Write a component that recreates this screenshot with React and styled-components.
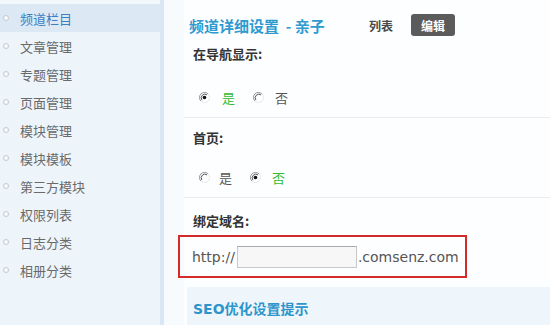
import React from "react";
import styled, { createGlobalStyle } from "styled-components";

const Global = createGlobalStyle`
  html, body { margin: 0; padding: 0; }
  body {
    width: 550px; height: 325px; overflow: hidden;
    background: #f8fbfd;
    font-family: "Noto Sans CJK SC", "Noto Sans", sans-serif;
  }
`;

const Page = styled.div`
  display: flex;
  width: 550px;
  height: 325px;
`;

const Sidebar = styled.ul`
  list-style: none;
  margin: 0;
  padding: 4px 0 0;
  width: 160px;
  flex: none;
  background: linear-gradient(to bottom, #f3f8fc 0, #f3f8fc 4px, #edf4fa 4px);
  border-right: 4px solid #d8e7f3;
  box-sizing: content-box;
`;

const NavItem = styled.li`
  display: flex;
  align-items: center;
  height: 28px;
  padding-left: 3px;
  gap: 11px;
  font-size: 13px;
  color: ${(p) => (p.$active ? "#3b7fc2" : "#6a6a6a")};
  background: ${(p) => (p.$active ? "#dce9f5" : "transparent")};
`;

const Bullet = styled.span`
  width: 4px;
  height: 4px;
  border: 1px solid #c3c8cc;
  border-radius: 50%;
  background: #f8fafc;
`;

const Main = styled.div`
  flex: 1;
  display: flex;
  flex-direction: column;
  padding-left: 20px;
  background: #f8fbfd;
`;

const Panel = styled.div`
  flex: 1;
  display: flex;
  flex-direction: column;
  background: #fdfeff;
`;

const Header = styled.div`
  display: flex;
  align-items: center;
  height: 22px;
  margin-top: 14px;
  padding-left: 5px;
`;

const Title = styled.h1`
  margin: 0;
  font-size: 15px;
  font-weight: 700;
  color: #2e9ad0;
  white-space: pre;
  width: 180px;
`;

const Tab = styled.span`
  font-size: 12px;
  font-weight: 700;
  color: #4a4a4a;
  margin-right: 18px;
`;

const ActiveTab = styled.span`
  display: inline-flex;
  align-items: center;
  justify-content: center;
  width: 44px;
  height: 22px;
  border-radius: 3px;
  background: #5b5b5b;
  color: #fff;
  font-size: 12px;
  font-weight: 700;
`;

const Section = styled.div`
  padding: ${(p) => p.$top}px 0 ${(p) => (p.$divider ? 10 : 0)}px 9px;
  border-bottom: ${(p) => (p.$divider ? "1px solid #ececec" : "none")};
`;

const Label = styled.div`
  font-size: 13px;
  line-height: 18px;
  font-weight: 700;
  color: #333;
`;

const RadioRow = styled.div`
  display: flex;
  align-items: center;
  height: 20px;
  margin-top: ${(p) => p.$gap}px;
  padding-left: 6px;
`;

const Option = styled.label`
  display: flex;
  align-items: center;
  gap: ${(p) => p.$gap}px;
  margin-right: 18px;
  font-size: 13px;
  color: ${(p) => (p.$checked ? "#33bb33" : "#555")};
`;

const RadioSvg = styled.svg`
  width: 11px;
  height: 11px;
  flex: none;
`;

const Radio = ({ checked }) => (
  <RadioSvg viewBox="0 0 12 12">
    <circle cx="6" cy="6" r="5.5" fill="#fff" />
    <path d="M9.9 2.1 A5.5 5.5 0 0 0 2.1 9.9" fill="none" stroke="#8a8a8a" strokeWidth="1" />
    <path d="M9.9 2.1 A5.5 5.5 0 0 1 2.1 9.9" fill="none" stroke="#e6e6e6" strokeWidth="1" />
    <path d="M8.8 3.2 A4 4 0 0 0 3.2 8.8" fill="none" stroke="#444" strokeWidth="1" />
    {checked && <circle cx="6" cy="6" r="2" fill="#111" />}
  </RadioSvg>
);

const DomainBox = styled.div`
  display: flex;
  align-items: center;
  height: 39px;
  margin: 5px 0 0 -15px;
  width: 273px;
  padding-left: 12px;
  border: 2px solid #d42a2a;
  font-family: "DejaVu Sans", sans-serif;
  font-size: 14px;
  color: #555;
`;

const DomainInput = styled.input`
  box-sizing: border-box;
  width: 120px;
  height: 22px;
  margin: 0 1px 0 2px;
  border: 1px solid #c8c8c8;
  border-top-color: #a9a9a9;
  background: #f7f7f7;
`;

const SeoBar = styled.div`
  flex: 1;
  margin: 9px 0 0 3px;
  padding: 11px 0 0 6px;
  background: #eef5fb;
  font-family: "DejaVu Sans", "Noto Sans CJK SC", sans-serif;
  font-size: 14px;
  font-weight: 700;
  color: #2e95cc;
`;

const navItems = ["频道栏目", "文章管理", "专题管理", "页面管理", "模块管理", "模块模板", "第三方模块", "权限列表", "日志分类", "相册分类"];

export default function App() {
  return (
    <>
      <Global />
      <Page>
        <Sidebar>
          {navItems.map((t, i) => (
            <NavItem key={t} $active={i === 0}>
              <Bullet />
              {t}
            </NavItem>
          ))}
        </Sidebar>
        <Main>
          <Panel>
            <Header>
              <Title>{"频道详细设置  - 亲子"}</Title>
              <Tab>列表</Tab>
              <ActiveTab>编辑</ActiveTab>
            </Header>
            <Section $top={9} $divider>
              <Label>在导航显示:</Label>
              <RadioRow $gap={24}>
                <Option $checked $gap={12}><Radio checked />是</Option>
                <Option $gap={11}><Radio />否</Option>
              </RadioRow>
            </Section>
            <Section $top={11} $divider>
              <Label>首页:</Label>
              <RadioRow $gap={20}>
                <Option $gap={9}><Radio />是</Option>
                <Option $checked $gap={11}><Radio checked />否</Option>
              </RadioRow>
            </Section>
            <Section $top={14}>
              <Label>绑定域名:</Label>
              <DomainBox>
                http://
                <DomainInput type="text" />
                .comsenz.com
              </DomainBox>
            </Section>
            <SeoBar>SEO优化设置提示</SeoBar>
          </Panel>
        </Main>
      </Page>
    </>
  );
}
